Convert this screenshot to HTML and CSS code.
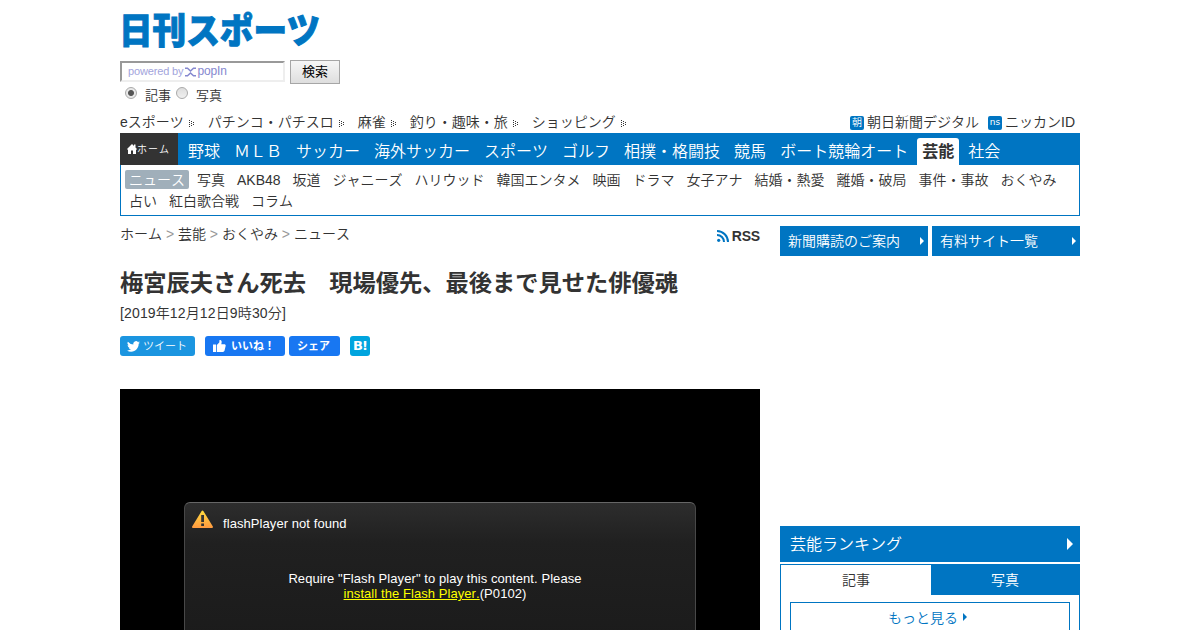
FILE: index.html
```html
<!DOCTYPE html>
<html lang="ja">
  <head>
    <meta charset="utf-8">
    <title>梅宮辰夫さん死去　現場優先、最後まで見せた俳優魂 - 芸能 : 日刊スポーツ</title>
    <link rel="stylesheet" href="styles.css">
  </head>
  <body>
    <div id="wrapper">
      <header>
        <a class="logo" href="#">
          <svg width="200" height="40" viewBox="0 0 200 40">
            <text x="-1" y="33" textLength="201" lengthAdjust="spacingAndGlyphs">日刊スポーツ</text>
          </svg>
        </a>

        <form id="search">
          <div class="search-row">
            <div class="search-box">
              <span>powered by</span>
              <svg width="11" height="10" viewBox="0 0 11 10"><path d="M0 1.200h2.500L5.500 4l3-2.800H11M0 8.800h2.500L5.500 6l3 2.800H11" fill="none" stroke="#8588cf" stroke-width="1.500"/></svg>
              <b>popIn</b>
            </div>
            <button type="button">検索</button>
          </div>
          <div class="search-type">
            <i class="radio checked"></i><label>記事</label>
            <i class="radio"></i><label>写真</label>
          </div>
        </form>

        <div id="topLinks">
          <ul>
            <li>eスポーツ<i class="dots"></i></li>
            <li>パチンコ・パチスロ<i class="dots"></i></li>
            <li>麻雀<i class="dots"></i></li>
            <li>釣り・趣味・旅<i class="dots"></i></li>
            <li>ショッピング<i class="dots"></i></li>
          </ul>
          <div class="services">
            <span class="badge">朝</span><span class="first">朝日新聞デジタル</span>
            <span class="badge ns">ns</span><span>ニッカンID</span>
          </div>
        </div>
      </header>

      <nav id="globalNav">
        <a class="home" href="#">
          <svg width="10" height="10" viewBox="0 0 10 10"><path d="M5 0L0 5l1 1v4h3V6.500h2V10h3V6l1-1-1.500-1.500V.5H7V2z" fill="#fff"/></svg>ホーム
        </a>
        <ul>
          <li>野球</li>
          <li>ＭＬＢ</li>
          <li>サッカー</li>
          <li>海外サッカー</li>
          <li>スポーツ</li>
          <li>ゴルフ</li>
          <li>相撲・格闘技</li>
          <li>競馬</li>
          <li>ボート競輪オート</li>
          <li class="active">芸能</li>
          <li>社会</li>
        </ul>
      </nav>
      <ul id="subNav">
        <li class="active">ニュース</li>
        <li>写真</li>
        <li>AKB48</li>
        <li>坂道</li>
        <li>ジャニーズ</li>
        <li>ハリウッド</li>
        <li>韓国エンタメ</li>
        <li>映画</li>
        <li>ドラマ</li>
        <li>女子アナ</li>
        <li>結婚・熱愛</li>
        <li>離婚・破局</li>
        <li>事件・事故</li>
        <li>おくやみ</li>
        <li>占い</li>
        <li>紅白歌合戦</li>
        <li>コラム</li>
      </ul>

      <div id="contents">
        <main>
          <div class="path">
            <div>ホーム <s>&gt;</s> 芸能 <s>&gt;</s> おくやみ <s>&gt;</s> ニュース</div>
            <a class="rss" href="#">
              <svg width="12" height="12" viewBox="0 0 12 12"><circle cx="1.700" cy="10.300" r="1.600" fill="#0075c2"/><path d="M0 5a7 7 0 0 1 7 7M0 1a11 11 0 0 1 11 11" fill="none" stroke="#0075c2" stroke-width="2"/></svg>RSS
            </a>
          </div>

          <h1>梅宮辰夫さん死去　現場優先、最後まで見せた俳優魂</h1>
          <p class="date">[2019年12月12日9時30分]</p>

          <div class="social">
            <a class="tweet" href="#">
              <svg width="13" height="11" viewBox="0 0 24 20"><path d="M24 2.400a10 10 0 0 1-2.800.8A5 5 0 0 0 23.300.5a10 10 0 0 1-3.100 1.200 4.900 4.900 0 0 0-8.400 4.500A14 14 0 0 1 1.700 1a4.900 4.900 0 0 0 1.500 6.600A5 5 0 0 1 1 7a4.900 4.900 0 0 0 3.900 4.800 5 5 0 0 1-2.200.1 4.900 4.900 0 0 0 4.600 3.400A10 10 0 0 1 0 17.300a14 14 0 0 0 7.500 2.200c9 0 14.300-7.700 14-14.600A10 10 0 0 0 24 2.400z" fill="#fff"/></svg>ツイート
            </a>
            <a class="like" href="#">
              <svg width="13" height="12" viewBox="0 0 13 12"><path d="M0 4.500h3V12H0zM3.800 5L6.300 2.500 6.500 0h1q1.300.5 1.200 2L8.300 4.200h3.500q1.200.5.900 1.600l-1.200 5q-.3 1-1.500 1.200H3.800z" fill="#fff"/></svg>いいね！
            </a>
            <a class="share" href="#">シェア</a>
            <a class="hatena" href="#">B!</a>
          </div>

          <div id="player">
            <div class="dialog">
              <div class="dialog-title">
                <svg width="22" height="19" viewBox="0 0 22 19">
                  <defs><linearGradient id="warn" x2="0" y2="1"><stop stop-color="#ffd83f"/><stop offset="1" stop-color="#ff9d40"/></linearGradient></defs>
                  <path d="M10.500 1.500L20 17H1z" fill="url(#warn)" stroke="url(#warn)" stroke-width="2" stroke-linejoin="round"/>
                  <path d="M9.200 5h2.800v7H9.200zM9.200 13.500h2.800V16H9.200z" fill="#333"/>
                </svg>
                <span>flashPlayer not found</span>
              </div>
              <p>Require "Flash Player" to play this content. Please<br><a href="#">install the Flash Player.</a>(P0102)</p>
            </div>
          </div>
        </main>

        <aside>
          <div class="guide">
            <a href="#">新聞購読のご案内<i class="arrow"></i></a>
            <a href="#">有料サイト一覧<i class="arrow"></i></a>
          </div>
          <h2>芸能ランキング<i class="arrow large"></i></h2>
          <div class="ranking">
            <div class="tabs">
              <div class="active">記事</div>
              <div>写真</div>
            </div>
            <a class="more" href="#">もっと見る<i class="arrow"></i></a>
          </div>
        </aside>
      </div>
    </div>
  </body>
</html>
```

FILE: styles.css
```css
* {
  box-sizing: border-box;
}

body {
  margin: 0;
  background: #fff;
  color: #333;
  font: 350 14px/21px "Liberation Sans", "Noto Sans CJK JP", sans-serif;
  font-kerning: none;
}

ul, h1, h2, p {
  margin: 0;
  padding: 0;
  list-style: none;
}

a {
  color: inherit;
  text-decoration: none;
}

svg {
  flex: none;
}

#wrapper {
  width: 960px;
  height: 630px;
  margin: 0 auto;
  overflow: hidden;
}

/* header */
header {
  height: 133px;
  padding-top: 11px;
}

.logo {
  display: block;
  height: 49px;
}

.logo svg {
  display: block;
  overflow: visible;
}

.logo text {
  font: 900 36px "Noto Sans CJK JP", sans-serif;
  fill: #0075c2;
  stroke: #0075c2;
  stroke-width: 1px;
}

.search-row {
  display: flex;
  gap: 5px;
  height: 24px;
}

.search-box {
  display: flex;
  align-items: center;
  width: 165px;
  height: 21px;
  margin-top: 1px;
  padding-left: 6px;
  border: 2px solid #eee;
  border-top-color: #999;
  border-left-color: #999;
  color: #a2a4dc;
  font-size: 11px;
  letter-spacing: -.15px;
}

.search-box svg {
  margin: 0 1px 0 2px;
}

.search-box b {
  color: #8588cf;
  font-weight: normal;
  font-size: 12px;
}

.search-row button {
  width: 50px;
  height: 24px;
  padding: 0;
  border: 1px solid #a6a6a6;
  background: linear-gradient(#f6f6f6, #dedede);
  color: #000;
  font: 13px/20px "Liberation Sans", "Noto Sans CJK JP", sans-serif;
}

.search-type {
  display: flex;
  align-items: center;
  height: 22px;
  padding-left: 5px;
  font-size: 13px;
}

.search-type label {
  margin: 1px 5px 0 8px;
}

.radio {
  width: 12px;
  height: 12px;
  margin-top: -4px;
  border: 1px solid #aaa;
  border-radius: 50%;
  background: linear-gradient(#ddd, #f0f0f0);
}

.radio.checked {
  background: radial-gradient(circle, #555 0 2.5px, #e8e8e8 3.5px);
}

#topLinks {
  display: flex;
  justify-content: space-between;
  height: 21px;
  margin-top: 6px;
}

#topLinks ul {
  display: flex;
}

#topLinks li {
  display: flex;
  align-items: center;
  margin-right: 12px;
}

/* dotted arrow, one shadow per dot */
.dots {
  width: 1px;
  height: 1px;
  margin: -5px 6px 0 5px;
  background: #333;
  box-shadow: 0 2px #333, 0 4px #333, 0 6px #333, 2px 1px #333, 2px 3px #333, 2px 5px #333, 4px 2px #333, 4px 4px #333;
}

.services {
  display: flex;
  align-items: center;
  padding-right: 5px;
}

.services .first {
  margin-right: 9px;
}

.badge {
  width: 14px;
  height: 14px;
  margin-right: 3px;
  border-radius: 2px;
  background: #0075c2;
  color: #fff;
  font-size: 10px;
  line-height: 13px;
  text-align: center;
}

.badge.ns {
  font-family: "DejaVu Sans", sans-serif;
  font-size: 9px;
  font-weight: 400;
}

/* navigation */
#globalNav {
  display: flex;
  height: 32px;
  background: #0075c2;
  color: #fff;
}

#globalNav .home {
  display: flex;
  align-items: center;
  width: 58px;
  padding-left: 7px;
  background: #333;
  font-size: 10px;
  letter-spacing: 1px;
}

#globalNav ul {
  display: flex;
  gap: 4px;
  padding: 5px 0 0 5px;
  font-size: 16px;
  line-height: 27px;
}

#globalNav li {
  padding: 0 5px;
}

#globalNav .active {
  border-radius: 3px 3px 0 0;
  background: #fff;
  color: #333;
  font-weight: bold;
}

#subNav {
  display: flex;
  flex-wrap: wrap;
  align-content: flex-start;
  column-gap: 4px;
  height: 51px;
  padding: 5px 4px 0;
  border: 1px solid #0075c2;
  border-top: 0;
}

#subNav li {
  padding: 0 4px;
}

#subNav .active {
  height: 19px;
  border-radius: 2px;
  background: #a0afba;
  color: #fff;
}

/* contents */
#contents {
  display: flex;
  justify-content: space-between;
}

main {
  width: 640px;
}

.path {
  display: flex;
  justify-content: space-between;
  padding-top: 8px;
}

.path s {
  color: #999;
  text-decoration: none;
}

.rss {
  display: flex;
  align-items: center;
  gap: 3px;
  height: 24px;
  font-weight: bold;
  letter-spacing: -.2px;
}

h1 {
  margin-top: 19px;
  font-size: 23.25px;
  line-height: 32px;
}

.date {
  margin-top: 2px;
  line-height: 24px;
  letter-spacing: .14px;
}

.social {
  display: flex;
  height: 20px;
  margin-top: 11px;
  color: #fff;
  font-size: 11px;
  line-height: 20px;
}

.social a {
  display: flex;
  align-items: center;
  border-radius: 3px;
}

.social .tweet {
  width: 75px;
  margin-right: 10px;
  padding-left: 7px;
  gap: 3px;
  background: #1b95e0;
}

.social .like,
.social .share {
  background: #1877f2;
  font-weight: bold;
}

.social .like {
  width: 80px;
  margin-right: 4px;
  padding-left: 8px;
  gap: 5px;
}

.social .share {
  width: 51px;
  margin-right: 10px;
  padding-left: 8px;
}

.social .hatena {
  width: 20px;
  justify-content: center;
  background: #00a4de;
  font: bold 13px/20px "DejaVu Sans", sans-serif;
  letter-spacing: -1px;
}

#player {
  height: 360px;
  margin-top: 33px;
  padding: 113px 64px 0;
  background: #000;
  color: #fff;
  font-size: 13px;
  line-height: 15px;
  letter-spacing: .07px;
}

.dialog {
  height: 200px;
  border: 1px solid #484848;
  border-top-color: #666;
  border-radius: 6px;
  background: linear-gradient(#2d2d2d, #202020 40px, #181818);
}

.dialog-title {
  display: flex;
  gap: 9px;
  height: 28px;
  padding: 7px 0 0 7px;
}

.dialog-title span {
  padding-top: 6px;
}

.dialog p {
  width: 500px;
  margin-top: 40px;
  text-align: center;
}

.dialog p a {
  color: #ff0;
  text-decoration: underline;
}

/* side column */
aside {
  width: 300px;
  padding-top: 10px;
}

.guide {
  display: flex;
  gap: 4px;
  height: 300px;
}

.guide a {
  display: flex;
  align-items: center;
  justify-content: space-between;
  width: 148px;
  height: 30px;
  padding: 0 4px 0 8px;
  background: #0075c2;
  color: #fff;
}

.arrow {
  width: 0;
  height: 0;
  border: 4px solid transparent;
  border-left: 4px solid currentColor;
  border-right: 0;
}

.arrow.large {
  border-width: 6px 0 6px 6px;
}

h2 {
  display: flex;
  align-items: center;
  justify-content: space-between;
  height: 36px;
  padding: 0 7px 0 10px;
  background: #0075c2;
  color: #fff;
  font-size: 16px;
  font-weight: 350;
}

.ranking {
  height: 120px;
  margin-top: 2px;
  border: 1px solid #0075c2;
}

.tabs {
  display: flex;
  height: 30px;
  line-height: 30px;
  text-align: center;
}

.tabs div {
  width: 148px;
  background: #0075c2;
  color: #fff;
}

.tabs .active {
  width: 150px;
  background: #fff;
  color: #333;
}

.more {
  display: flex;
  align-items: center;
  justify-content: center;
  gap: 5px;
  height: 32px;
  margin: 7px 9px 0;
  padding-right: 5px;
  border: 1px solid #0075c2;
  color: #0075c2;
  line-height: 28px;
}

.more .arrow {
  margin-top: -3px;
}
```
